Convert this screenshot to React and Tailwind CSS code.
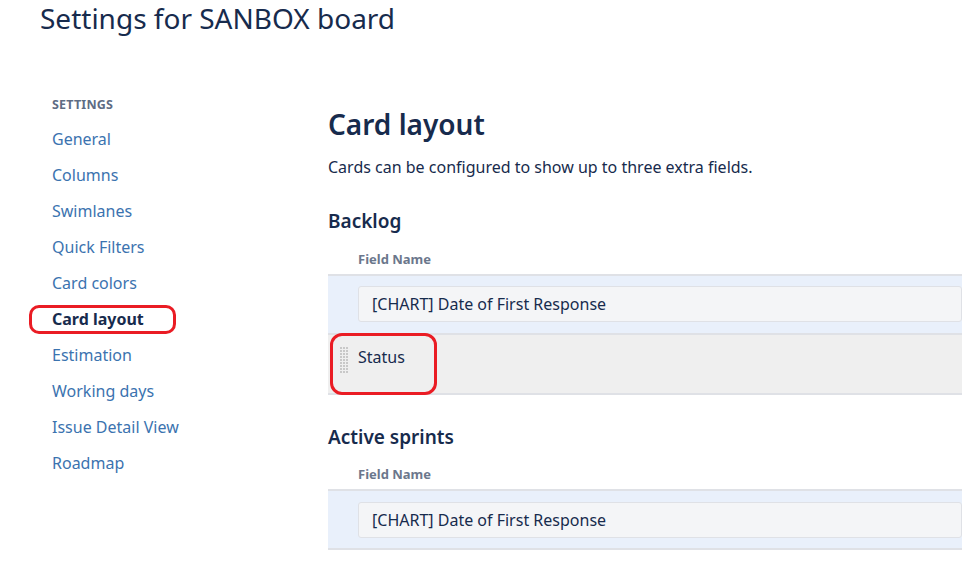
import React from 'react';

const navItems = [
  'General',
  'Columns',
  'Swimlanes',
  'Quick Filters',
  'Card colors',
  'Card layout',
  'Estimation',
  'Working days',
  'Issue Detail View',
  'Roadmap',
];

const DragHandle = () => (
  <svg width="10" height="28" viewBox="0 0 10 28" className="shrink-0">
    {Array.from({ length: 9 }).map((_, r) =>
      [0, 1, 2].map((c) => (
        <rect key={`${r}-${c}`} x={1 + c * 3} y={1 + r * 3} width="2" height="2" fill="#c8c8c8" />
      ))
    )}
  </svg>
);

const FieldTable = ({ children }) => (
  <div>
    <div className="pl-[30px] h-[28px] flex items-center text-[13px] font-bold text-[#6b778c]">
      Field Name
    </div>
    <div className="border-t-2 border-[#dfe1e6]">{children}</div>
  </div>
);

const FieldRow = ({ label }) => (
  <div className="bg-[#e9f0fb] h-[59px] flex items-center pl-[30px] border-b-2 border-[#dfe1e6]">
    <div className="flex-1 h-[36px] bg-[#f4f5f7] border border-[#dfe1e6] rounded-[3px] flex items-center pl-[13px] text-[16px] text-[#172b4d]">
      {label}
    </div>
  </div>
);

export default function App() {
  return (
    <div
      className="w-[962px] h-[562px] overflow-hidden bg-white relative text-[#172b4d]"
      style={{ fontFamily: '"Segoe UI", "Noto Sans", "Open Sans", sans-serif' }}
    >
      <h1 className="pl-[40px] h-[38px] text-[28px] leading-[36px] font-normal text-[#172b4d]">
        Settings for SANBOX board
      </h1>

      <div className="flex mt-[54px]">
        {/* Sidebar */}
        <aside className="w-[328px] shrink-0 pl-[52px]">
          <div className="text-[12.5px] font-bold text-[#5e6c84] h-[26px] flex items-center tracking-[0.2px]">
            SETTINGS
          </div>
          <ul className="mt-[3px]">
            {navItems.map((item) => (
              <li
                key={item}
                className={`h-[36px] flex items-center text-[16px] ${
                  item === 'Card layout' ? 'font-bold text-[#172b4d] relative' : 'text-[#3b73af]'
                }`}
              >
                {item}
                {item === 'Card layout' && (
                  <span className="absolute left-[-23px] top-[4px] w-[147px] h-[29px] border-[3px] border-[#ea1c24] rounded-[10px]" />
                )}
              </li>
            ))}
          </ul>
        </aside>

        {/* Main */}
        <main className="flex-1 pt-[13px]">
          <h2 className="text-[28px] leading-[38px] font-semibold text-[#172b4d]">Card layout</h2>
          <p className="mt-[12px] text-[16px] text-[#172b4d]">
            Cards can be configured to show up to three extra fields.
          </p>

          <h3 className="mt-[28px] text-[19px] font-semibold text-[#172b4d]">Backlog</h3>
          <div className="mt-[10px]">
            <FieldTable>
              <FieldRow label="[CHART] Date of First Response" />
              <div className="relative bg-[#efefef] h-[60px] flex items-start pt-[11px] pl-[11px] border-b-2 border-[#dfe1e6]">
                <DragHandle />
                <span className="ml-[9px] text-[16px] text-[#172b4d] leading-[22px]">Status</span>
                <span className="absolute left-[2px] top-[-2px] w-[107px] h-[62px] border-[3px] border-[#ea1c24] rounded-[12px]" />
              </div>
            </FieldTable>
          </div>

          <h3 className="mt-[28px] text-[19px] font-semibold text-[#172b4d]">Active sprints</h3>
          <div className="mt-[10px]">
            <FieldTable>
              <FieldRow label="[CHART] Date of First Response" />
            </FieldTable>
          </div>
        </main>
      </div>
    </div>
  );
}
